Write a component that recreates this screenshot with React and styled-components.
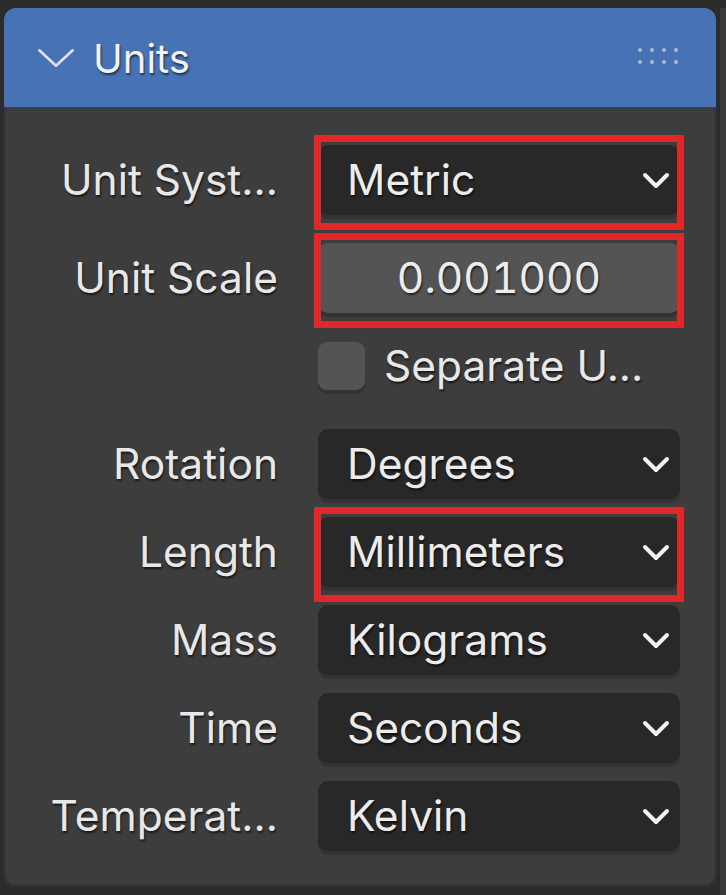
import React from 'react';
import styled, { createGlobalStyle } from 'styled-components';

const Global = createGlobalStyle`
  html, body { margin: 0; padding: 0; background: #2c2c2c; }
  body { font-family: Inter, "Noto Sans", "DejaVu Sans", sans-serif; }
`;

const Page = styled.div`
  display: flex;
  width: 726px;
  height: 895px;
  padding: 8px 0 0 4px;
  box-sizing: border-box;
  gap: 2px;
`;

const Panel = styled.section`
  width: 712px;
  height: 878px;
  border-radius: 12px;
  background: #3d3d3d;
  box-shadow: inset 2px 0 0 #363636, inset -2px 0 0 #363636, inset 0 -2px 0 #363636;
  overflow: hidden;
  display: flex;
  flex-direction: column;
`;

const Edge = styled.div`
  flex: 1;
  background: #393939;
  border-left: 2px solid #2a2a2a;
`;

const Header = styled.header`
  height: 99px;
  flex: none;
  background: #4772b3;
  display: flex;
  align-items: center;
  padding: 0 38px 0 33px;
  gap: 18px;
  color: #f2f2f2;
  font-size: 40px;
  text-shadow: 1px 2px 2px rgba(0, 0, 0, 0.55);
`;

const Title = styled.span`
  flex: 1;
  line-height: 1;
  margin-top: 2px;
`;

const Grip = styled.div`
  display: grid;
  grid-template-columns: repeat(4, 4px);
  grid-auto-rows: 4px;
  column-gap: 8px;
  row-gap: 8px;
  margin-top: -4px;

  i {
    display: block;
    width: 4px;
    height: 4px;
    border-radius: 50%;
    background: #a9bbd9;
  }
`;

const Body = styled.div`
  padding: 38px 36px 0 20px;
  display: flex;
  flex-direction: column;
  gap: 28px;
`;

const Group = styled.div`
  display: flex;
  flex-direction: column;
  gap: 18px;
`;

const Row = styled.div`
  display: grid;
  grid-template-columns: 254px 362px;
  column-gap: 40px;
  align-items: center;
  height: 70px;
`;

const Label = styled.div`
  text-align: right;
  color: #e8e8e8;
  font-size: 42.5px;
  white-space: nowrap;
  text-shadow: 1px 2px 2px rgba(0, 0, 0, 0.6);
  margin-top: -2px;
`;

const Field = styled.div`
  position: relative;
  height: 70px;
  border-radius: 10px;
  background: ${p => (p.$number ? '#545454' : '#282828')};
  box-shadow: 0 4px 0 #333333;
  display: flex;
  align-items: center;
  justify-content: ${p => (p.$number ? 'center' : 'space-between')};
  padding: ${p => (p.$number ? '0' : '0 10px 0 29px')};
  color: #ececec;
  font-size: 42.5px;
  font-variant-numeric: tabular-nums;
  text-shadow: 1px 2px 2px rgba(0, 0, 0, 0.6);
  box-sizing: border-box;

  span { margin-top: -2px; }
`;

const Highlight = styled.div`
  position: absolute;
  top: -10px;
  bottom: -15px;
  left: -4px;
  right: -4px;
  border: 7px solid #e3262a;
  pointer-events: none;
`;

const CheckRow = styled.div`
  display: flex;
  align-items: center;
  gap: 19px;
  color: #e8e8e8;
  font-size: 42.5px;
  text-shadow: 1px 2px 2px rgba(0, 0, 0, 0.6);
  white-space: nowrap;

  span { margin-top: -2px; }
`;

const Box = styled.div`
  width: 47px;
  height: 48px;
  border-radius: 9px;
  background: #545454;
  box-shadow: 0 4px 0 #333333;
  flex: none;
`;

const Chevron = ({ w = 28, h = 17, stroke = 4, color = '#f2f2f2' }) => (
  <svg width={w} height={h} viewBox={`0 0 ${w} ${h}`} fill="none" style={{ flex: 'none' }}>
    <path
      d={`M${stroke / 2 + 1} ${stroke / 2 + 1} L${w / 2} ${h - stroke / 2 - 1} L${w - stroke / 2 - 1} ${stroke / 2 + 1}`}
      stroke={color}
      strokeWidth={stroke}
      strokeLinecap="round"
      strokeLinejoin="round"
    />
  </svg>
);

function Dropdown({ value, marked }) {
  return (
    <Field>
      <span>{value}</span>
      <Chevron />
      {marked && <Highlight />}
    </Field>
  );
}

export default function App() {
  return (
    <>
      <Global />
      <Page>
        <Panel>
          <Header>
            <Chevron w={38} h={20} stroke={2.6} color="#dde4ee" />
            <Title>Units</Title>
            <Grip>
              {Array.from({ length: 8 }).map((_, i) => <i key={i} />)}
            </Grip>
          </Header>
          <Body>
            <Group>
              <Row>
                <Label>Unit Syst...</Label>
                <Dropdown value="Metric" marked />
              </Row>
            </Group>
            <Group>
              <Row>
                <Label>Unit Scale</Label>
                <Field $number>
                  <span>0.001000</span>
                  <Highlight />
                </Field>
              </Row>
              <Row>
                <div />
                <CheckRow>
                  <Box />
                  <span>Separate U...</span>
                </CheckRow>
              </Row>
            </Group>
            <Group>
              <Row>
                <Label>Rotation</Label>
                <Dropdown value="Degrees" />
              </Row>
              <Row>
                <Label>Length</Label>
                <Dropdown value="Millimeters" marked />
              </Row>
              <Row>
                <Label>Mass</Label>
                <Dropdown value="Kilograms" />
              </Row>
              <Row>
                <Label>Time</Label>
                <Dropdown value="Seconds" />
              </Row>
              <Row>
                <Label>Temperat...</Label>
                <Dropdown value="Kelvin" />
              </Row>
            </Group>
          </Body>
        </Panel>
        <Edge />
      </Page>
    </>
  );
}
